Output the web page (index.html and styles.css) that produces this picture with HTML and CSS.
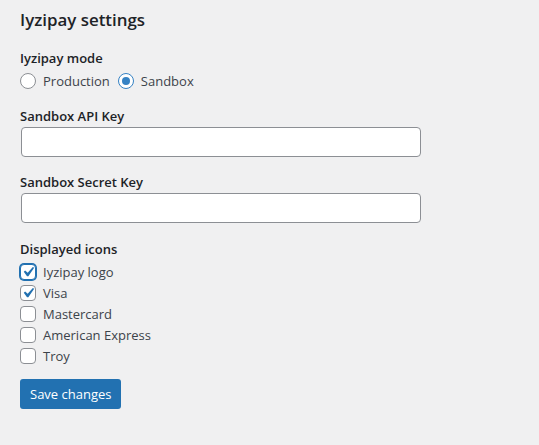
FILE: index.html
```html
<!DOCTYPE html>
<html>
<head>
<meta charset="utf-8">
<link rel="stylesheet" href="styles.css">
</head>
<body>
<div class="wrap">
  <h2 class="title">Iyzipay settings</h2>
  <div class="field">
    <div class="label">Iyzipay mode</div>
    <div class="radios">
      <label class="opt"><span class="radio"></span>Production</label>
      <label class="opt"><span class="radio on"></span>Sandbox</label>
    </div>
  </div>
  <div class="field">
    <div class="label tight">Sandbox API Key</div>
    <div class="input"></div>
  </div>
  <div class="field last">
    <div class="label tight">Sandbox Secret Key</div>
    <div class="input"></div>
  </div>
  <div class="field icons">
    <div class="label loose">Displayed icons</div>
    <div class="checks">
      <label class="chk"><span class="box focus"><svg viewBox="0 0 20 20" width="20" height="20"><path d="M14.83 4.89l1.34.94-5.81 8.38H9.02L5.78 9.67l1.34-1.25 2.57 2.4z" fill="#2271b1"/></svg></span>Iyzipay logo</label>
      <label class="chk"><span class="box"><svg viewBox="0 0 20 20" width="20" height="20"><path d="M14.83 4.89l1.34.94-5.81 8.38H9.02L5.78 9.67l1.34-1.25 2.57 2.4z" fill="#2271b1"/></svg></span>Visa</label>
      <label class="chk"><span class="box"></span>Mastercard</label>
      <label class="chk"><span class="box"></span>American Express</label>
      <label class="chk"><span class="box"></span>Troy</label>
    </div>
  </div>
  <div class="btn">Save changes</div>
</div>
</body>
</html>
```
FILE: styles.css
```css
html, body { margin: 0; padding: 0; }
body {
  background: #f0f0f1;
  font-family: "Open Sans", "Noto Sans", sans-serif;
  font-size: 13px;
  color: #3c434a;
}
.wrap { padding: 10px 20px; }
.title {
  margin: 0 0 19px;
  font-size: 16.9px;
  font-weight: 600;
  color: #1d2327;
  line-height: 20px;
}
.field { margin-bottom: 16px; }
.field.last { margin-bottom: 17px; }
.field.icons { margin-bottom: 15px; }
.label {
  font-weight: 600;
  color: #1d2327;
  line-height: 18px;
  margin-bottom: 4px;
}
.label.tight { margin-bottom: 2px; }
.label.loose { margin-bottom: 6px; }
.radios { display: flex; gap: 8px; }
.opt { display: flex; align-items: center; gap: 7px; line-height: 20px; }
.radio {
  width: 14px; height: 14px;
  border: 1px solid #8c8f94;
  border-radius: 50%;
  background: #fff;
  position: relative;
  box-sizing: content-box;
}
.radio.on {
  border-color: #3582c4;
}
.radio.on::after {
  content: "";
  position: absolute;
  left: 3px; top: 3px;
  width: 8px; height: 8px;
  border-radius: 50%;
  background: #3582c4;
}
.input {
  margin-left: 1px;
  width: 398px;
  height: 28px;
  border: 1px solid #8c8f94;
  border-radius: 4px;
  background: #fff;
}
.checks { display: flex; flex-direction: column; gap: 5px; }
.chk { display: flex; align-items: center; gap: 7px; line-height: 16px; }
.box {
  width: 14px; height: 14px;
  border: 1px solid #8c8f94;
  border-radius: 4px;
  background: #fff;
  display: flex; align-items: center; justify-content: center;
  box-sizing: content-box;
  overflow: visible;
}
.box svg { flex: none; margin: -3px; }
.box.focus {
  border-color: #2271b1;
  box-shadow: 0 0 0 1px #2271b1;
}
.btn {
  display: inline-block;
  background: #2271b1;
  color: #fff;
  border-radius: 3px;
  padding: 0 10px;
  line-height: 30px;
}
```
